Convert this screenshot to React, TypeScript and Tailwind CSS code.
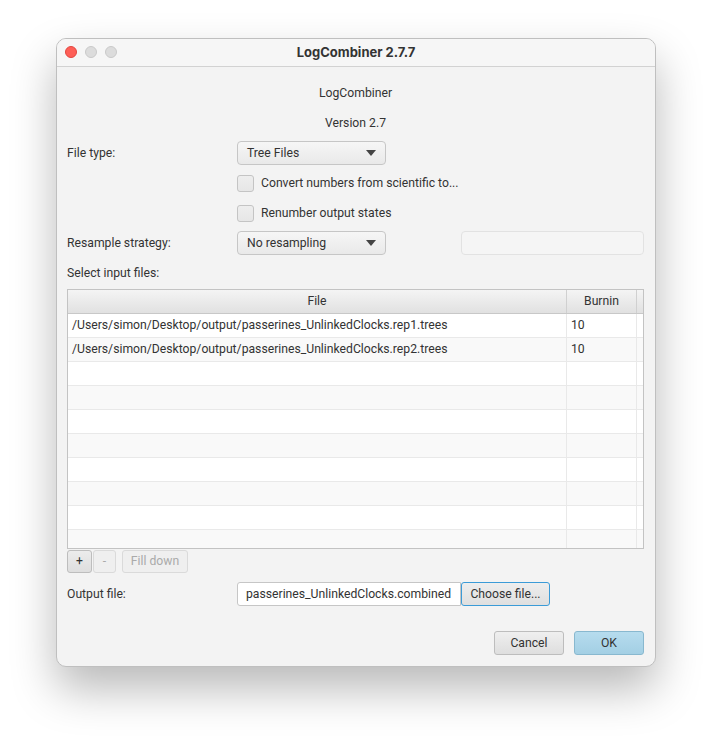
import React from "react";

const font = { fontFamily: "Roboto, 'Noto Sans', sans-serif" };
const titleFont = { fontFamily: "Inter, 'Noto Sans', sans-serif" };

const Combo = ({ label }: { label: string }) => (
  <div className="w-[149px] h-6 flex items-center justify-between pl-[9px] pr-[9px] rounded-[4px] border border-[#c6c6c6] bg-gradient-to-b from-[#f6f6f6] to-[#e9e9e9] text-[#333]">
    <span>{label}</span>
    <svg width="10" height="6" viewBox="0 0 10 6">
      <path d="M0 0 L10 0 L5 6 Z" fill="#444" />
    </svg>
  </div>
);

const Check = ({ label }: { label: string }) => (
  <div className="flex items-center h-6 gap-[7px]">
    <div className="w-[17px] h-[17px] rounded-[3px] border border-[#c4c4c4] bg-gradient-to-b from-[#eeeeee] to-[#e6e6e6]" />
    <span className="text-[#333]">{label}</span>
  </div>
);

const files = [
  "/Users/simon/Desktop/output/passerines_UnlinkedClocks.rep1.trees",
  "/Users/simon/Desktop/output/passerines_UnlinkedClocks.rep2.trees",
];

export default function App() {
  const rows = Array.from({ length: 10 }, (_, i) => i);
  return (
    <div className="w-[712px] h-[740px] bg-white pt-[38px] pl-[56px]" style={font}>
      <div className="w-[600px] rounded-[10px] bg-[#f3f3f3] border border-[#bfbfbf] shadow-[0_22px_45px_rgba(0,0,0,0.28)] overflow-hidden">
        <div className="h-[28px] relative flex items-center justify-center bg-[#f6f6f6] border-b border-[#d2d2d2]">
          <div className="absolute left-[8px] top-[7px] flex gap-[8px]">
            <div className="w-3 h-3 rounded-full bg-[#fe5f57] border border-[#e2463f]" />
            <div className="w-3 h-3 rounded-full bg-[#dcdcdc] border border-[#c9c9c9]" />
            <div className="w-3 h-3 rounded-full bg-[#dcdcdc] border border-[#c9c9c9]" />
          </div>
          <span className="text-[13px] font-bold text-[#333]" style={titleFont}>
            LogCombiner 2.7.7
          </span>
        </div>

        <div className="pl-[10px] pr-[11px] pb-[11px] flex flex-col text-[12.2px] text-[#333]">
          <div className="mt-[18px] h-4 leading-4 text-center">LogCombiner</div>
          <div className="mt-[14px] h-4 leading-4 text-center">Version 2.7</div>

          <div className="mt-[10px] flex items-center h-6">
            <div className="w-[170px]">File type:</div>
            <Combo label="Tree Files" />
          </div>
          <div className="mt-[6px] pl-[170px]">
            <Check label="Convert numbers from  scientific to..." />
          </div>
          <div className="mt-[6px] pl-[170px]">
            <Check label="Renumber output states" />
          </div>
          <div className="mt-[6px] flex items-center h-6">
            <div className="w-[170px]">Resample strategy:</div>
            <Combo label="No resampling" />
            <div className="ml-[75px] flex-1 h-6 rounded-[4px] border border-[#e2e2e2] bg-[#f5f5f5]" />
          </div>

          <div className="mt-[10px] h-4 leading-4">Select input files:</div>

          <div className="mt-[8px] h-[260px] border border-[#c3c3c3] bg-white overflow-hidden flex flex-col">
            <div className="h-[24px] shrink-0 flex bg-gradient-to-b from-[#f4f4f4] to-[#e1e1e1] border-b border-[#c8c8c8]">
              <div className="w-[499px] flex items-center justify-center border-r border-[#d0d0d0]">File</div>
              <div className="w-[70px] flex items-center justify-center border-r border-[#d0d0d0]">Burnin</div>
              <div className="flex-1" />
            </div>
            {rows.map((i) => (
              <div
                key={i}
                className={`h-[24px] shrink-0 flex border-b border-[#e9e9e9] ${i % 2 === 1 ? "bg-[#f9f9f9]" : "bg-white"}`}
              >
                <div className="w-[499px] flex items-center pl-[4px] border-r border-[#e9e9e9] whitespace-nowrap">
                  {files[i] ?? ""}
                </div>
                <div className="w-[70px] flex items-center pl-[4px] border-r border-[#e9e9e9]">
                  {files[i] ? "10" : ""}
                </div>
                <div className="flex-1" />
              </div>
            ))}
          </div>

          <div className="mt-[1px] flex h-[23px] gap-[1px]">
            <div className="w-[25px] flex items-center justify-center rounded-[3px] border border-[#bdbdbd] bg-gradient-to-b from-[#ececec] to-[#dedede]">
              +
            </div>
            <div className="w-[23px] flex items-center justify-center rounded-[3px] border border-[#dadada] bg-[#efefef] text-[#aaa]">
              -
            </div>
            <div className="ml-[5px] w-[66px] flex items-center justify-center rounded-[3px] border border-[#dadada] bg-[#efefef] text-[#aaa]">
              Fill down
            </div>
          </div>

          <div className="mt-[9px] flex items-center h-6">
            <div className="w-[170px]">Output file:</div>
            <div className="w-[224px] h-6 flex items-center pl-[8px] rounded-l-[3px] border border-[#c6c6c6] bg-white overflow-hidden whitespace-nowrap">
              <span className="overflow-hidden">passerines_UnlinkedClocks.combined</span>
            </div>
            <div className="w-[89px] h-6 flex items-center justify-center rounded-[3px] border border-[#3b9bd7] bg-gradient-to-b from-[#eeeeee] to-[#dfdfdf]">
              Choose file...
            </div>
          </div>

          <div className="mt-[25px] flex justify-end gap-[10px]">
            <div className="w-[70px] h-6 flex items-center justify-center rounded-[3px] border border-[#bdbdbd] bg-gradient-to-b from-[#efefef] to-[#dedede]">
              Cancel
            </div>
            <div className="w-[70px] h-6 flex items-center justify-center rounded-[3px] border border-[#88b8cf] bg-gradient-to-b from-[#b6dcee] to-[#a3cfe4]">
              OK
            </div>
          </div>
        </div>
      </div>
    </div>
  );
}
